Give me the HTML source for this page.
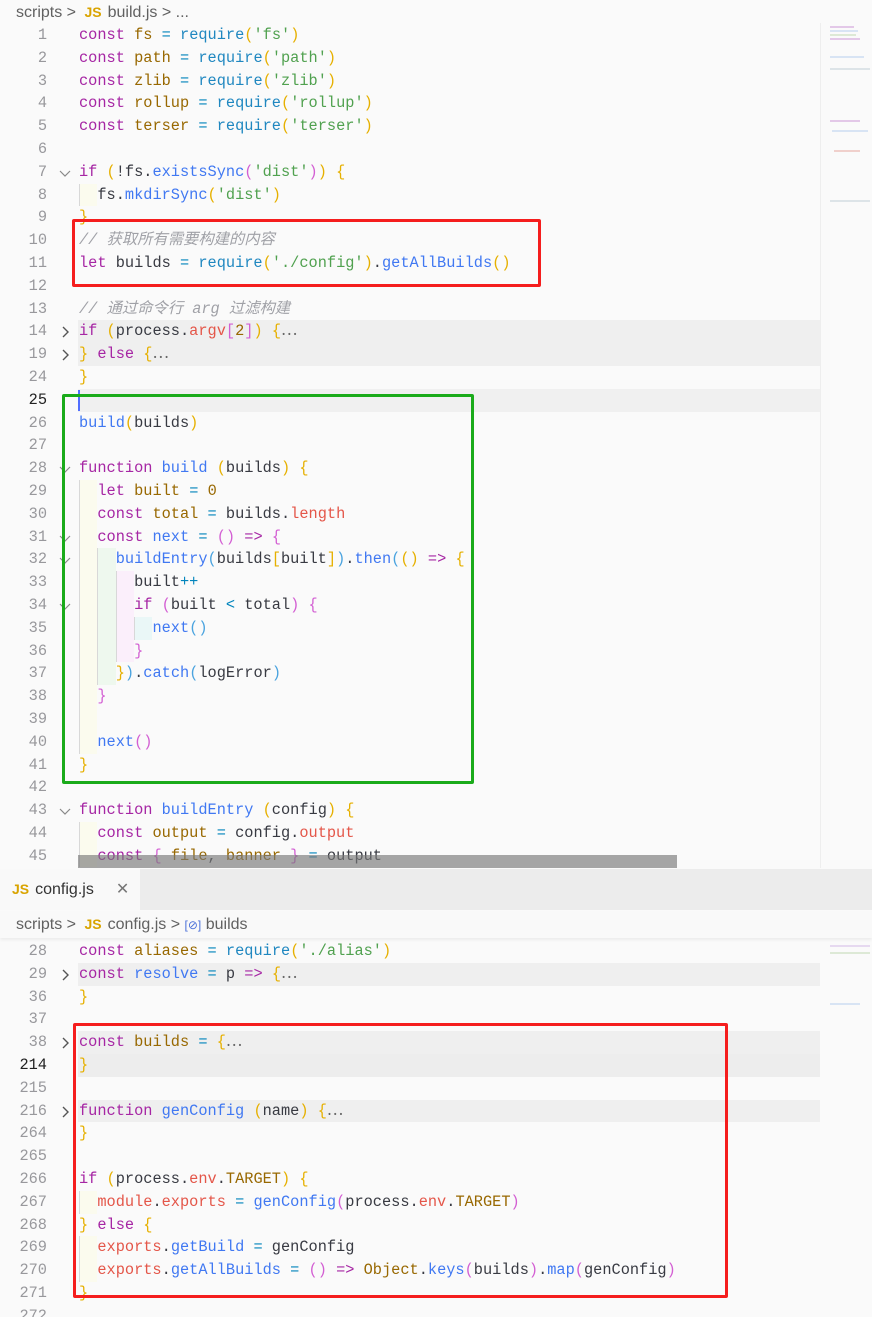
<!DOCTYPE html>
<html><head><meta charset="utf-8"><style>
*{margin:0;padding:0;box-sizing:border-box}
body{width:872px;height:1317px;background:#fafafa;position:relative;overflow:hidden;font-family:"Liberation Mono","Noto Sans CJK SC",monospace}
.bc{position:absolute;left:0;width:872px;height:24px;font:16px "Liberation Sans",sans-serif;color:#616161;padding-left:16px;line-height:24px;white-space:nowrap}
.js{color:#d9a400;font-weight:bold;font-size:14px;margin:0 6px 0 4px}
.ed{position:absolute;left:0;width:872px;overflow:hidden}
.r{position:relative;height:22.8px;line-height:22.8px;font-size:15.3px;white-space:pre;color:#383a42}
.n{position:absolute;left:0;width:47px;text-align:right;color:#98989c;font-size:15.3px}
.cur .n{color:#222}
.c{position:absolute;left:79px}
.fo{position:absolute;left:58px;top:5px;width:14px;height:14px}
.bgrow{position:absolute;left:78px;width:742px;top:0;height:22.8px;background:#efefef}
.k{color:#a626a4}.v{color:#986801}.f{color:#4078f2}.q{color:#1f87c0}.s{color:#50a14f}.o{color:#0184bc}.p{color:#e45649}
.cm{color:#a0a1a7;font-style:italic}
.b1{color:#e6b000}.b2{color:#d35fd3}.b3{color:#4aa3df}
.g{display:inline-block;width:18.36px;height:22.8px;vertical-align:top;border-left:1px solid #d8d8d8}
.g1{background:#fbfbee}.g2{background:#eef8ee}.g3{background:#fbeffb}.g4{background:#eaf7f7}
.dots{color:#666}
.box{position:absolute;border:3px solid;border-radius:2px}
.mm{position:absolute;height:2px}
</style></head><body>
<svg width="0" height="0" style="position:absolute">
<defs>
<symbol id="dn" viewBox="0 0 14 14"><polyline points="2,5 7,10 12,5" fill="none" stroke="#888" stroke-width="1.2"/></symbol>
<symbol id="rt" viewBox="0 0 14 14"><polyline points="5,2 10,7 5,12" fill="none" stroke="#555" stroke-width="1.4"/></symbol>
</defs></svg>

<div class="bc" style="top:0">scripts &gt; <span class="js">JS</span>build.js &gt; ...</div>

<div class="ed" style="top:24px;height:844px">
<div class="r"><span class="n">1</span><span class="c"><span class="k">const</span> <span class="v">fs</span> <span class="o">=</span> <span class="q">require</span><span class="b1">(</span><span class="s">'fs'</span><span class="b1">)</span></span></div>
<div class="r"><span class="n">2</span><span class="c"><span class="k">const</span> <span class="v">path</span> <span class="o">=</span> <span class="q">require</span><span class="b1">(</span><span class="s">'path'</span><span class="b1">)</span></span></div>
<div class="r"><span class="n">3</span><span class="c"><span class="k">const</span> <span class="v">zlib</span> <span class="o">=</span> <span class="q">require</span><span class="b1">(</span><span class="s">'zlib'</span><span class="b1">)</span></span></div>
<div class="r"><span class="n">4</span><span class="c"><span class="k">const</span> <span class="v">rollup</span> <span class="o">=</span> <span class="q">require</span><span class="b1">(</span><span class="s">'rollup'</span><span class="b1">)</span></span></div>
<div class="r"><span class="n">5</span><span class="c"><span class="k">const</span> <span class="v">terser</span> <span class="o">=</span> <span class="q">require</span><span class="b1">(</span><span class="s">'terser'</span><span class="b1">)</span></span></div>
<div class="r"><span class="n">6</span></div>
<div class="r"><span class="n">7</span><svg class="fo"><use href="#dn"/></svg><span class="c"><span class="k">if</span> <span class="b1">(</span>!fs.<span class="f">existsSync</span><span class="b2">(</span><span class="s">'dist'</span><span class="b2">)</span><span class="b1">)</span> <span class="b1">{</span></span></div>
<div class="r"><span class="n">8</span><span class="c"><i class="g g1"></i>fs.<span class="f">mkdirSync</span><span class="b1">(</span><span class="s">'dist'</span><span class="b1">)</span></span></div>
<div class="r"><span class="n">9</span><span class="c"><span class="b1">}</span></span></div>
<div class="r"><span class="n">10</span><span class="c cm">// 获取所有需要构建的内容</span></div>
<div class="r"><span class="n">11</span><span class="c"><span class="k">let</span> builds <span class="o">=</span> <span class="q">require</span><span class="b1">(</span><span class="s">'./config'</span><span class="b1">)</span>.<span class="f">getAllBuilds</span><span class="b1">()</span></span></div>
<div class="r"><span class="n">12</span></div>
<div class="r"><span class="n">13</span><span class="c cm">// 通过命令行 arg 过滤构建</span></div>
<div class="r"><div class="bgrow"></div><span class="n">14</span><svg class="fo"><use href="#rt"/></svg><span class="c"><span class="k">if</span> <span class="b1">(</span>process.<span class="p">argv</span><span class="b2">[</span><span class="v">2</span><span class="b2">]</span><span class="b1">)</span> <span class="b1">{</span><span class="dots">⋯</span></span></div>
<div class="r"><div class="bgrow"></div><span class="n">19</span><svg class="fo"><use href="#rt"/></svg><span class="c"><span class="b1">}</span> <span class="k">else</span> <span class="b1">{</span><span class="dots">⋯</span></span></div>
<div class="r"><span class="n">24</span><span class="c"><span class="b1">}</span></span></div>
<div class="r cur"><div class="bgrow" style="background:#f0f0f0"></div><span class="n">25</span><span style="position:absolute;left:78px;top:1px;width:2px;height:21px;background:#526fff"></span></div>
<div class="r"><span class="n">26</span><span class="c"><span class="f">build</span><span class="b1">(</span>builds<span class="b1">)</span></span></div>
<div class="r"><span class="n">27</span></div>
<div class="r"><span class="n">28</span><svg class="fo"><use href="#dn"/></svg><span class="c"><span class="k">function</span> <span class="f">build</span> <span class="b1">(</span>builds<span class="b1">)</span> <span class="b1">{</span></span></div>
<div class="r"><span class="n">29</span><span class="c"><i class="g g1"></i><span class="k">let</span> <span class="v">built</span> <span class="o">=</span> <span class="v">0</span></span></div>
<div class="r"><span class="n">30</span><span class="c"><i class="g g1"></i><span class="k">const</span> <span class="v">total</span> <span class="o">=</span> builds.<span class="p">length</span></span></div>
<div class="r"><span class="n">31</span><svg class="fo"><use href="#dn"/></svg><span class="c"><i class="g g1"></i><span class="k">const</span> <span class="f">next</span> <span class="o">=</span> <span class="b2">()</span> <span class="k">=&gt;</span> <span class="b2">{</span></span></div>
<div class="r"><span class="n">32</span><svg class="fo"><use href="#dn"/></svg><span class="c"><i class="g g1"></i><i class="g g2"></i><span class="f">buildEntry</span><span class="b3">(</span>builds<span class="b1">[</span>built<span class="b1">]</span><span class="b3">)</span>.<span class="f">then</span><span class="b3">(</span><span class="b1">()</span> <span class="k">=&gt;</span> <span class="b1">{</span></span></div>
<div class="r"><span class="n">33</span><span class="c"><i class="g g1"></i><i class="g g2"></i><i class="g g3"></i>built<span class="o">++</span></span></div>
<div class="r"><span class="n">34</span><svg class="fo"><use href="#dn"/></svg><span class="c"><i class="g g1"></i><i class="g g2"></i><i class="g g3"></i><span class="k">if</span> <span class="b2">(</span>built <span class="o">&lt;</span> total<span class="b2">)</span> <span class="b2">{</span></span></div>
<div class="r"><span class="n">35</span><span class="c"><i class="g g1"></i><i class="g g2"></i><i class="g g3"></i><i class="g g4"></i><span class="f">next</span><span class="b3">()</span></span></div>
<div class="r"><span class="n">36</span><span class="c"><i class="g g1"></i><i class="g g2"></i><i class="g g3"></i><span class="b2">}</span></span></div>
<div class="r"><span class="n">37</span><span class="c"><i class="g g1"></i><i class="g g2"></i><span class="b1">}</span><span class="b3">)</span>.<span class="f">catch</span><span class="b3">(</span>logError<span class="b3">)</span></span></div>
<div class="r"><span class="n">38</span><span class="c"><i class="g g1"></i><span class="b2">}</span></span></div>
<div class="r"><span class="n">39</span><span class="c"><i class="g g1"></i></span></div>
<div class="r"><span class="n">40</span><span class="c"><i class="g g1"></i><span class="f">next</span><span class="b2">()</span></span></div>
<div class="r"><span class="n">41</span><span class="c"><span class="b1">}</span></span></div>
<div class="r"><span class="n">42</span></div>
<div class="r"><span class="n">43</span><svg class="fo"><use href="#dn"/></svg><span class="c"><span class="k">function</span> <span class="f">buildEntry</span> <span class="b1">(</span>config<span class="b1">)</span> <span class="b1">{</span></span></div>
<div class="r"><span class="n">44</span><span class="c"><i class="g g1"></i><span class="k">const</span> <span class="v">output</span> <span class="o">=</span> config.<span class="p">output</span></span></div>
<div class="r"><span class="n">45</span><span class="c"><i class="g g1"></i><span class="k">const</span> <span class="b2">{</span> <span class="v">file</span>, <span class="v">banner</span> <span class="b2">}</span> <span class="o">=</span> output</span></div>
</div>
<div style="position:absolute;left:78px;top:855px;width:599px;height:13px;background:rgba(120,120,120,0.65)"></div>
<div style="position:absolute;left:820px;top:23px;width:1px;height:845px;background:#eee"></div>

<div style="position:absolute;left:0;top:869px;width:872px;height:41px;background:#ececec"></div>
<div style="position:absolute;left:0;top:869px;width:140px;height:41px;background:#f9f9f9;font:16px 'Liberation Sans',sans-serif;color:#333;line-height:41px;padding-left:12px;white-space:nowrap"><span class="js" style="margin-left:0">JS</span>config.js<span style="color:#777;margin-left:22px;font-size:16px">✕</span></div>
<div class="bc" style="top:911px;height:27px;line-height:27px;background:#f9f9f9;box-shadow:0 2px 3px rgba(0,0,0,0.06)">scripts &gt; <span class="js">JS</span>config.js &gt; <span style="color:#4a6fd8;font-size:12px">[⊘]</span> builds</div>

<div class="ed" style="top:940px;height:377px">
<div class="r"><span class="n">28</span><span class="c"><span class="k">const</span> <span class="v">aliases</span> <span class="o">=</span> <span class="q">require</span><span class="b1">(</span><span class="s">'./alias'</span><span class="b1">)</span></span></div>
<div class="r"><div class="bgrow"></div><span class="n">29</span><svg class="fo"><use href="#rt"/></svg><span class="c"><span class="k">const</span> <span class="f">resolve</span> <span class="o">=</span> p <span class="k">=&gt;</span> <span class="b1">{</span><span class="dots">⋯</span></span></div>
<div class="r"><span class="n">36</span><span class="c"><span class="b1">}</span></span></div>
<div class="r"><span class="n">37</span></div>
<div class="r"><div class="bgrow"></div><span class="n">38</span><svg class="fo"><use href="#rt"/></svg><span class="c"><span class="k">const</span> <span class="v">builds</span> <span class="o">=</span> <span class="b1">{</span><span class="dots">⋯</span></span></div>
<div class="r cur"><div class="bgrow" style="background:#ededed"></div><span class="n">214</span><span class="c"><span class="b1">}</span></span></div>
<div class="r"><span class="n">215</span></div>
<div class="r"><div class="bgrow"></div><span class="n">216</span><svg class="fo"><use href="#rt"/></svg><span class="c"><span class="k">function</span> <span class="f">genConfig</span> <span class="b1">(</span>name<span class="b1">)</span> <span class="b1">{</span><span class="dots">⋯</span></span></div>
<div class="r"><span class="n">264</span><span class="c"><span class="b1">}</span></span></div>
<div class="r"><span class="n">265</span></div>
<div class="r"><span class="n">266</span><span class="c"><span class="k">if</span> <span class="b1">(</span>process.<span class="p">env</span>.<span class="v">TARGET</span><span class="b1">)</span> <span class="b1">{</span></span></div>
<div class="r"><span class="n">267</span><span class="c"><i class="g g1"></i><span class="p">module</span>.<span class="p">exports</span> <span class="o">=</span> <span class="f">genConfig</span><span class="b2">(</span>process.<span class="p">env</span>.<span class="v">TARGET</span><span class="b2">)</span></span></div>
<div class="r"><span class="n">268</span><span class="c"><span class="b1">}</span> <span class="k">else</span> <span class="b1">{</span></span></div>
<div class="r"><span class="n">269</span><span class="c"><i class="g g1"></i><span class="p">exports</span>.<span class="f">getBuild</span> <span class="o">=</span> genConfig</span></div>
<div class="r"><span class="n">270</span><span class="c"><i class="g g1"></i><span class="p">exports</span>.<span class="f">getAllBuilds</span> <span class="o">=</span> <span class="b2">()</span> <span class="k">=&gt;</span> <span class="v">Object</span>.<span class="f">keys</span><span class="b2">(</span>builds<span class="b2">)</span>.<span class="f">map</span><span class="b2">(</span>genConfig<span class="b2">)</span></span></div>
<div class="r"><span class="n">271</span><span class="c"><span class="b1">}</span></span></div>
<div class="r"><span class="n">272</span></div>
</div>

<div class="mm" style="left:830px;top:26px;width:24px;background:#e3c8e8"></div>
<div class="mm" style="left:830px;top:30px;width:28px;background:#d8e4f4"></div>
<div class="mm" style="left:830px;top:34px;width:26px;background:#dde9d6"></div>
<div class="mm" style="left:830px;top:38px;width:30px;background:#e3c8e8"></div>
<div class="mm" style="left:830px;top:56px;width:34px;background:#d8e4f4"></div>
<div class="mm" style="left:830px;top:68px;width:40px;background:#dde4e8"></div>
<div class="mm" style="left:830px;top:120px;width:30px;background:#e3c8e8"></div>
<div class="mm" style="left:832px;top:130px;width:36px;background:#d8e4f4"></div>
<div class="mm" style="left:834px;top:150px;width:26px;background:#f0d0cc"></div>
<div class="mm" style="left:830px;top:200px;width:40px;background:#dde4e8"></div>
<div class="mm" style="left:830px;top:945px;width:40px;background:#e6d9f0"></div>
<div class="mm" style="left:830px;top:952px;width:40px;background:#dde9d6"></div>
<div class="mm" style="left:830px;top:1003px;width:30px;background:#d8e4f4"></div>

<div class="box" style="left:72px;top:219px;width:469px;height:68px;border-color:#f51d1d"></div>
<div class="box" style="left:62px;top:394px;width:412px;height:390px;border-color:#1aab1a"></div>
<div class="box" style="left:73px;top:1023px;width:655px;height:275px;border-color:#f51d1d"></div>
</body></html>
